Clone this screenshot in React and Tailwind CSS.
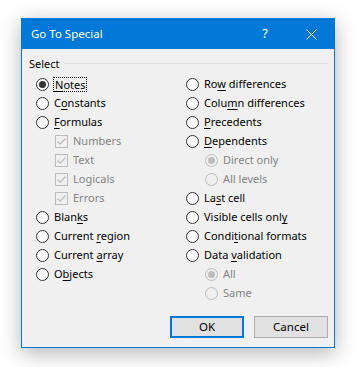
import React from "react";

const font = { fontFamily: '"Segoe UI", "Noto Sans", sans-serif' };

const Key = ({ children }) => <span className="underline underline-offset-2">{children}</span>;

const Radio = ({ checked, disabled }) => (
    <span
        className={`flex h-[13px] w-[13px] shrink-0 items-center justify-center rounded-full border ${
            disabled ? "border-[#bcbcbc] bg-[#f0f0f0]" : "border-[#333] bg-white"
        }`}
    >
        {checked && (
            <span className={`h-[7px] w-[7px] rounded-full ${disabled ? "bg-[#bcbcbc]" : "bg-[#333]"}`} />
        )}
    </span>
);

const Check = () => (
    <span className="flex h-[13px] w-[13px] shrink-0 items-center justify-center border border-[#bcbcbc] bg-[#f0f0f0]">
        <svg width="11" height="11" viewBox="0 0 11 11">
            <path d="M1.5 5.5 L4.2 8.2 L9.5 2.5" fill="none" stroke="#bcbcbc" strokeWidth="1.2" />
        </svg>
    </span>
);

const Row = ({ children, indent, gap = "gap-[4px]" }) => (
    <div className={`flex h-[19px] items-center ${gap} ${indent || ""}`}>{children}</div>
);

export default function App() {
    return (
        <div className="h-[367px] w-[363px] bg-white pl-[21px] pt-[18px] text-[11px] text-black" style={font}>
            <div className="flex h-[330px] w-[314px] flex-col border border-[#0078d7] bg-[#f0f0f0] shadow-[0_5px_20px_rgba(0,0,0,0.3)]">
                <div className="flex h-[30px] shrink-0 items-center bg-[#0078d7] pl-[9px] text-white">
                    <span className="flex-1 text-[11.5px]">Go To Special</span>
                    <span className="w-[46px] text-center text-[13px]">?</span>
                    <span className="flex w-[46px] items-center justify-center">
                        <svg width="11" height="11" viewBox="0 0 11 11">
                            <path d="M0.5 0.5 L10.5 10.5 M10.5 0.5 L0.5 10.5" stroke="#fff" strokeWidth="1" />
                        </svg>
                    </span>
                </div>

                <div className="flex items-center gap-[4px] pl-[7px] pr-[6px] pt-[9px] leading-none">
                    <span>Select</span>
                    <span className="h-px flex-1 bg-[#dcdcdc]" />
                </div>

                <div className="mt-[6px] grid grid-cols-[150px_1fr] pl-[14px]">
                    <div className="flex flex-col">
                        <Row>
                            <Radio checked />
                            <span className="border border-dotted border-black px-[1px] leading-[13px]">
                                <Key>N</Key>otes
                            </span>
                        </Row>
                        <Row>
                            <Radio />
                            <span className="pl-[1px]">
                                C<Key>o</Key>nstants
                            </span>
                        </Row>
                        <Row>
                            <Radio />
                            <span className="pl-[1px]">
                                <Key>F</Key>ormulas
                            </span>
                        </Row>
                        {["Numbers", "Text", "Logicals", "Errors"].map((t) => (
                            <Row key={t} indent="pl-[19px]" gap="gap-[5px]">
                                <Check />
                                <span className="text-[#838383]">{t}</span>
                            </Row>
                        ))}
                        <Row>
                            <Radio />
                            <span className="pl-[1px]">
                                Blan<Key>k</Key>s
                            </span>
                        </Row>
                        <Row>
                            <Radio />
                            <span className="pl-[1px]">
                                Current <Key>r</Key>egion
                            </span>
                        </Row>
                        <Row>
                            <Radio />
                            <span className="pl-[1px]">
                                Current <Key>a</Key>rray
                            </span>
                        </Row>
                        <Row>
                            <Radio />
                            <span className="pl-[1px]">
                                O<Key>b</Key>jects
                            </span>
                        </Row>
                    </div>

                    <div className="flex flex-col">
                        <Row>
                            <Radio />
                            <span className="pl-[1px]">
                                Ro<Key>w</Key> differences
                            </span>
                        </Row>
                        <Row>
                            <Radio />
                            <span className="pl-[1px]">
                                Colu<Key>m</Key>n differences
                            </span>
                        </Row>
                        <Row>
                            <Radio />
                            <span className="pl-[1px]">
                                <Key>P</Key>recedents
                            </span>
                        </Row>
                        <Row>
                            <Radio />
                            <span className="pl-[1px]">
                                <Key>D</Key>ependents
                            </span>
                        </Row>
                        <Row indent="pl-[19px]" gap="gap-[5px]">
                            <Radio checked disabled />
                            <span className="text-[#838383]">Direct only</span>
                        </Row>
                        <Row indent="pl-[19px]" gap="gap-[5px]">
                            <Radio disabled />
                            <span className="text-[#838383]">All levels</span>
                        </Row>
                        <Row>
                            <Radio />
                            <span className="pl-[1px]">
                                La<Key>s</Key>t cell
                            </span>
                        </Row>
                        <Row>
                            <Radio />
                            <span className="pl-[1px]">
                                Visible cells onl<Key>y</Key>
                            </span>
                        </Row>
                        <Row>
                            <Radio />
                            <span className="pl-[1px]">
                                Condi<Key>t</Key>ional formats
                            </span>
                        </Row>
                        <Row>
                            <Radio />
                            <span className="pl-[1px]">
                                Data <Key>v</Key>alidation
                            </span>
                        </Row>
                        <Row indent="pl-[19px]" gap="gap-[5px]">
                            <Radio checked disabled />
                            <span className="text-[#838383]">All</span>
                        </Row>
                        <Row indent="pl-[19px]" gap="gap-[5px]">
                            <Radio disabled />
                            <span className="text-[#838383]">Same</span>
                        </Row>
                    </div>
                </div>

                <div className="mt-auto mb-[9px] flex justify-end gap-[10px] pr-[6px]">
                    <button className="h-[22px] w-[74px] border-2 border-[#0078d7] bg-[#e1e1e1] text-[11.5px]">OK</button>
                    <button className="h-[22px] w-[74px] border border-[#adadad] bg-[#e1e1e1] text-[11.5px]">Cancel</button>
                </div>
            </div>
        </div>
    );
}
